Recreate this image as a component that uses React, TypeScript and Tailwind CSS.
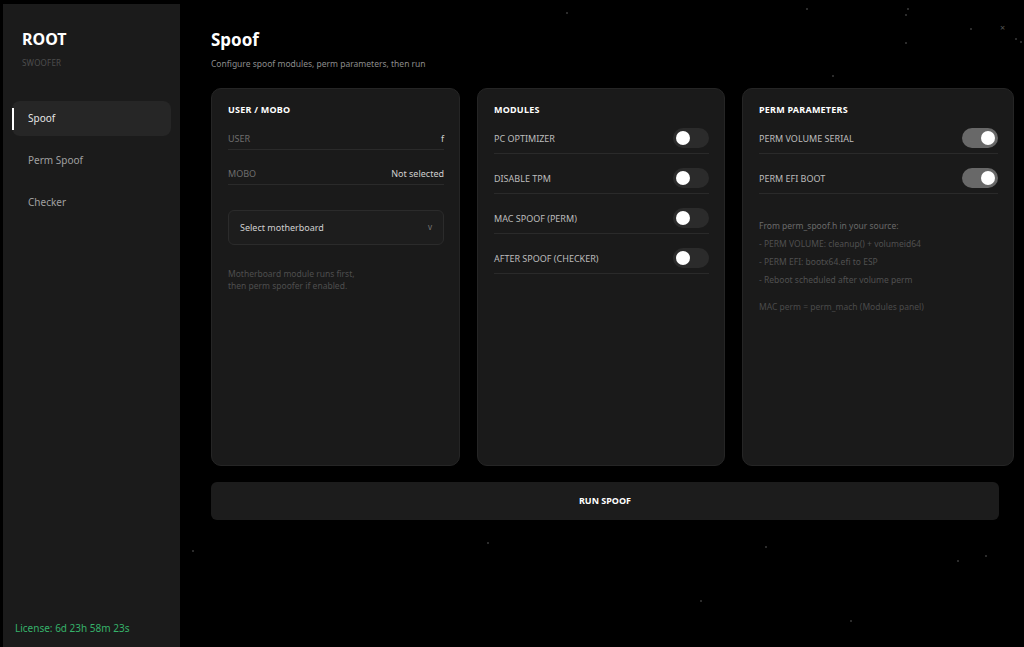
import { useState } from 'react';

const stars = [
  [832, 75], [1020, 41], [579, 180], [598, 200], [671, 184], [815, 204], [905, 14], [905, 42], [970, 28], [1015, 38],
  [566, 12], [806, 8], [907, 8], [270, 104], [962, 145], [1004, 325], [487, 542], [765, 546], [957, 560], [985, 555],
  [192, 550], [250, 300], [640, 270], [520, 360], [880, 430], [990, 400], [700, 600], [850, 620],
];

function Toggle({ on }: { on: boolean }) {
  return (
    <div
      className={`w-[36px] h-[20px] rounded-full flex items-center px-[3px] ${
        on ? 'bg-[#686868] justify-end' : 'bg-[#2b2b2b] justify-start'
      }`}
    >
      <div className="w-[14px] h-[14px] rounded-full bg-white" />
    </div>
  );
}

function Card({ title, children }: { title: string; children: React.ReactNode }) {
  return (
    <div className="bg-[#1a1a1a] border border-[#252525] rounded-[10px] pl-4 pr-[15px] pt-[14px] pb-4 h-[378px]">
      <h3 className="text-[9px] font-bold text-white tracking-wide leading-[13px]">{title}</h3>
      {children}
    </div>
  );
}

function SwitchRow({ label, on }: { label: string; on: boolean }) {
  return (
    <div className="flex justify-between items-center h-[30px] mt-[10px] first-of-type:mt-[8px] border-b border-[#2a2a2a]">
      <span className="text-[9px] text-[#bdbdbd]">{label}</span>
      <Toggle on={on} />
    </div>
  );
}

export default function App() {
  const [modules] = useState([
    { label: 'PC OPTIMIZER', on: false },
    { label: 'DISABLE TPM', on: false },
    { label: 'MAC SPOOF (PERM)', on: false },
    { label: 'AFTER SPOOF (CHECKER)', on: false },
  ]);
  const perms = [
    { label: 'PERM VOLUME SERIAL', on: true },
    { label: 'PERM EFI BOOT', on: true },
  ];

  return (
    <div
      className="relative w-[1024px] h-[647px] bg-black overflow-hidden flex"
      style={{ fontFamily: '"Noto Sans", "Open Sans", sans-serif' }}
    >
      {/* star field */}
      {stars.map(([x, y], i) => (
        <div
          key={i}
          className="absolute w-[2px] h-[2px] rounded-full bg-[#3a3a3a]"
          style={{ left: x, top: y }}
        />
      ))}
      <div className="absolute left-[1000px] top-[23px] text-[9px] text-[#555] leading-none">×</div>

      {/* Sidebar */}
      <aside className="relative z-10 shrink-0 ml-[3px] mt-[4px] w-[177px] bg-[#1b1b1b] flex flex-col px-[9px] pt-[27px] pb-[11px]">
        <div className="px-[10px]">
          <h1 className="text-[16px] font-bold text-white leading-none">ROOT</h1>
          <p className="text-[8px] text-[#4d4d4d] mt-[10px] tracking-wide">SWOOFER</p>
        </div>
        <nav className="mt-[32px] flex flex-col gap-[7px]">
          <div className="relative h-[35px] rounded-[8px] bg-[#262626] flex items-center pl-[16px] text-[10px] text-[#e5e5e5]">
            <span className="absolute left-0 top-[7px] w-[2px] h-[22px] bg-white" />
            Spoof
          </div>
          <div className="h-[35px] flex items-center pl-[16px] text-[10px] text-[#a0a0a0]">Perm Spoof</div>
          <div className="h-[35px] flex items-center pl-[16px] text-[10px] text-[#a0a0a0]">Checker</div>
        </nav>
        <div className="mt-auto px-[3px] text-[10px] text-[#36b26a]">License: 6d 23h 58m 23s</div>
      </aside>

      {/* Main */}
      <main className="relative z-10 flex-1 min-w-0 pl-[31px] pr-[25px] pt-[31px]">
        <h2 className="text-[17px] font-bold text-white leading-none">Spoof</h2>
        <p className="text-[8.5px] text-[#8c8c8c] mt-[10px]">Configure spoof modules, perm parameters, then run</p>

        <div className="w-[803px] flex gap-[17px] mt-[17px]">
          <div className="w-[249px] shrink-0">
            <Card title="USER / MOBO">
              <div className="flex justify-between items-center h-[22px] mt-[12px] border-b border-[#2a2a2a] text-[9px]">
                <span className="text-[#6e6e6e]">USER</span>
                <span className="text-[#cfcfcf]">f</span>
              </div>
              <div className="flex justify-between items-center h-[22px] mt-[13px] border-b border-[#2a2a2a] text-[9px]">
                <span className="text-[#6e6e6e]">MOBO</span>
                <span className="text-[#cfcfcf]">Not selected</span>
              </div>
              <div className="mt-[25px] h-[35px] rounded-[6px] bg-[#1d1d1d] border border-[#2b2b2b] flex items-center justify-between px-[11px] text-[9px]">
                <span className="text-[#d0d0d0]">Select motherboard</span>
                <span className="text-[#777] text-[8px]">v</span>
              </div>
              <p className="mt-[23px] text-[8.5px] leading-[12px] text-[#4e4e4e]">
                Motherboard module runs first,
                <br />
                then perm spoofer if enabled.
              </p>
            </Card>
          </div>

          <div className="w-[248px] shrink-0">
            <Card title="MODULES">
              {modules.map((m) => (
                <SwitchRow key={m.label} label={m.label} on={m.on} />
              ))}
            </Card>
          </div>

          <div className="w-[272px] shrink-0">
            <Card title="PERM PARAMETERS">
              {perms.map((p) => (
                <SwitchRow key={p.label} label={p.label} on={p.on} />
              ))}
              <div className="mt-[23px] text-[8.5px] text-[#6a6a6a] leading-[18px]">
                <p>From perm_spoof.h in your source:</p>
                <p className="text-[#505050]">- PERM VOLUME: cleanup() + volumeid64</p>
                <p className="text-[#505050]">- PERM EFI: bootx64.efi to ESP</p>
                <p className="text-[#505050]">- Reboot scheduled after volume perm</p>
                <p className="mt-[9px] text-[#4a4a4a]">MAC perm = perm_mach (Modules panel)</p>
              </div>
            </Card>
          </div>
        </div>

        <button className="mt-[16px] w-[788px] h-[38px] rounded-[6px] bg-[#1c1c1c] text-[9px] font-bold text-white">
          RUN SPOOF
        </button>
      </main>
    </div>
  );
}
